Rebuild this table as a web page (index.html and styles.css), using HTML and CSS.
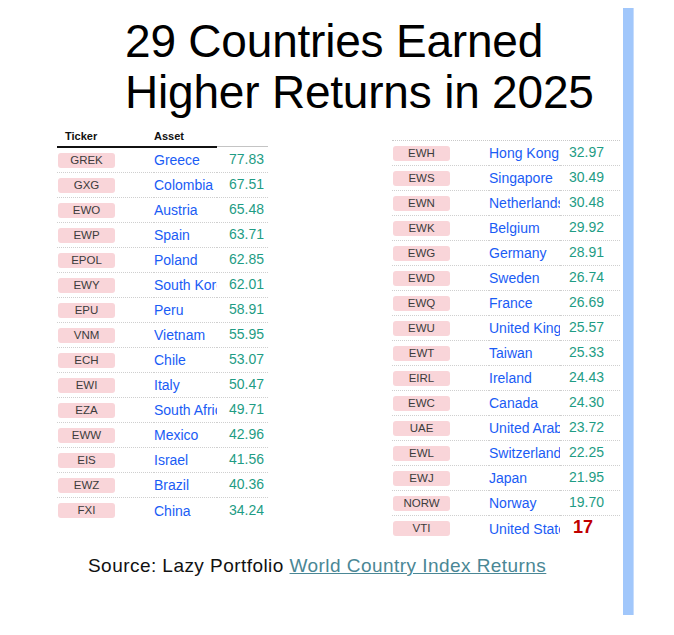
FILE: index.html
```html
<!DOCTYPE html>
<html lang="en">
<head>
<meta charset="utf-8">
<title>29 Countries Earned Higher Returns in 2025</title>
<link rel="stylesheet" href="styles.css">
</head>
<body>
<div class="page">
  <main class="content">
    <h1 class="title">29 Countries Earned<br>Higher Returns in 2025</h1>
    <div class="tables">
      <div class="tbl tbl-left">
        <div class="th th-tk">Ticker</div><div class="th th-as">Asset</div><div class="th th-vl"></div>
        <div class="tk"><span class="pill">GREK</span></div><div class="as">Greece</div><div class="vl">77.83</div>
        <div class="tk"><span class="pill">GXG</span></div><div class="as">Colombia</div><div class="vl">67.51</div>
        <div class="tk"><span class="pill">EWO</span></div><div class="as">Austria</div><div class="vl">65.48</div>
        <div class="tk"><span class="pill">EWP</span></div><div class="as">Spain</div><div class="vl">63.71</div>
        <div class="tk"><span class="pill">EPOL</span></div><div class="as">Poland</div><div class="vl">62.85</div>
        <div class="tk"><span class="pill">EWY</span></div><div class="as">South Korea</div><div class="vl">62.01</div>
        <div class="tk"><span class="pill">EPU</span></div><div class="as">Peru</div><div class="vl">58.91</div>
        <div class="tk"><span class="pill">VNM</span></div><div class="as">Vietnam</div><div class="vl">55.95</div>
        <div class="tk"><span class="pill">ECH</span></div><div class="as">Chile</div><div class="vl">53.07</div>
        <div class="tk"><span class="pill">EWI</span></div><div class="as">Italy</div><div class="vl">50.47</div>
        <div class="tk"><span class="pill">EZA</span></div><div class="as">South Africa</div><div class="vl">49.71</div>
        <div class="tk"><span class="pill">EWW</span></div><div class="as">Mexico</div><div class="vl">42.96</div>
        <div class="tk"><span class="pill">EIS</span></div><div class="as">Israel</div><div class="vl">41.56</div>
        <div class="tk"><span class="pill">EWZ</span></div><div class="as">Brazil</div><div class="vl">40.36</div>
        <div class="tk last"><span class="pill">FXI</span></div><div class="as last">China</div><div class="vl last">34.24</div>
      </div>
      <div class="tbl tbl-right">
        <div class="tk"><span class="pill">EWH</span></div><div class="as">Hong Kong</div><div class="vl">32.97</div>
        <div class="tk"><span class="pill">EWS</span></div><div class="as">Singapore</div><div class="vl">30.49</div>
        <div class="tk"><span class="pill">EWN</span></div><div class="as">Netherlands</div><div class="vl">30.48</div>
        <div class="tk"><span class="pill">EWK</span></div><div class="as">Belgium</div><div class="vl">29.92</div>
        <div class="tk"><span class="pill">EWG</span></div><div class="as">Germany</div><div class="vl">28.91</div>
        <div class="tk"><span class="pill">EWD</span></div><div class="as">Sweden</div><div class="vl">26.74</div>
        <div class="tk"><span class="pill">EWQ</span></div><div class="as">France</div><div class="vl">26.69</div>
        <div class="tk"><span class="pill">EWU</span></div><div class="as">United Kingdom</div><div class="vl">25.57</div>
        <div class="tk"><span class="pill">EWT</span></div><div class="as">Taiwan</div><div class="vl">25.33</div>
        <div class="tk"><span class="pill">EIRL</span></div><div class="as">Ireland</div><div class="vl">24.43</div>
        <div class="tk"><span class="pill">EWC</span></div><div class="as">Canada</div><div class="vl">24.30</div>
        <div class="tk"><span class="pill">UAE</span></div><div class="as">United Arab Emirates</div><div class="vl">23.72</div>
        <div class="tk"><span class="pill">EWL</span></div><div class="as">Switzerland</div><div class="vl">22.25</div>
        <div class="tk"><span class="pill">EWJ</span></div><div class="as">Japan</div><div class="vl">21.95</div>
        <div class="tk"><span class="pill">NORW</span></div><div class="as">Norway</div><div class="vl">19.70</div>
        <div class="tk last"><span class="pill">VTI</span></div><div class="as last">United States</div><div class="vl last us">17</div>
      </div>
    </div>
    <p class="source">Source: Lazy Portfolio <a class="source-link" href="#">World Country Index Returns</a></p>
  </main>
  <div class="bar"></div>
</div>
</body>
</html>
```

FILE: styles.css
```css
* { box-sizing: border-box; }

html, body {
  margin: 0;
  padding: 0;
  background: #ffffff;
}

body {
  font-family: "Liberation Sans", Arial, sans-serif;
  color: #000;
}

.page {
  display: flex;
  width: 674px;
  height: 635px;
}

.content {
  width: 623px;
  display: flex;
  flex-direction: column;
}

.bar {
  width: 11px;
  height: 607px;
  margin-top: 8px;
  background: #a1c7fb;
  border-right: 1px solid #c6dcfc;
}

.title {
  margin: 16px 0 0 0;
  padding-left: 125px;
  font-size: 46px;
  font-weight: 400;
  line-height: 51px;
  letter-spacing: -0.2px;
  color: #000;
}

.tables {
  display: flex;
  align-items: flex-start;
  margin-top: 10px;
  padding-left: 57px;
}

.tbl {
  display: grid;
  grid-auto-rows: 25px;
}

.tbl-left {
  width: 211px;
  grid-template-columns: 97px 63px 51px;
  grid-template-rows: 20px;
}

.tbl-right {
  width: 228px;
  margin-left: 124px;
  margin-top: 12px;
  grid-template-columns: 97px 71px 60px;
  border-top: 1px dotted #c9c9c9;
}

.th {
  height: 20px;
  padding-top: 2px;
  font-size: 11px;
  line-height: 12px;
  font-weight: 700;
  color: #111;
  border-bottom: 2px solid #111;
}

.th-tk { padding-left: 8px; }

.th-vl {
  border-bottom: 1px solid #c4c4c4;
  height: 19px;
}

.tk, .as, .vl {
  height: 25px;
  display: flex;
  align-items: center;
  border-bottom: 1px dotted #cfcfcf;
  white-space: nowrap;
  overflow: hidden;
}

.tk { padding-left: 1px; }

.pill {
  display: block;
  width: 57px;
  height: 15px;
  background: #f9d5d9;
  border-radius: 3px;
  color: #3c3c3c;
  font-size: 11.5px;
  line-height: 15px;
  text-align: center;
}

.as {
  color: #1a5cf5;
  font-size: 14px;
}

.vl {
  color: #1e9c84;
  font-size: 14px;
  padding-bottom: 2px;
}

.tbl-left .vl { padding-left: 12px; }
.tbl-right .vl { padding-left: 9px; }

.last { border-bottom: none; }

.vl.us {
  color: #c00000;
  font-weight: 700;
  font-size: 18px;
  padding-left: 13px;
}

.source {
  margin: 14px 0 0 0;
  padding-left: 88px;
  font-size: 19px;
  line-height: 22px;
  letter-spacing: 0.45px;
  color: #111;
}

.source-link {
  color: #4a8795;
  text-decoration: underline;
}
```
